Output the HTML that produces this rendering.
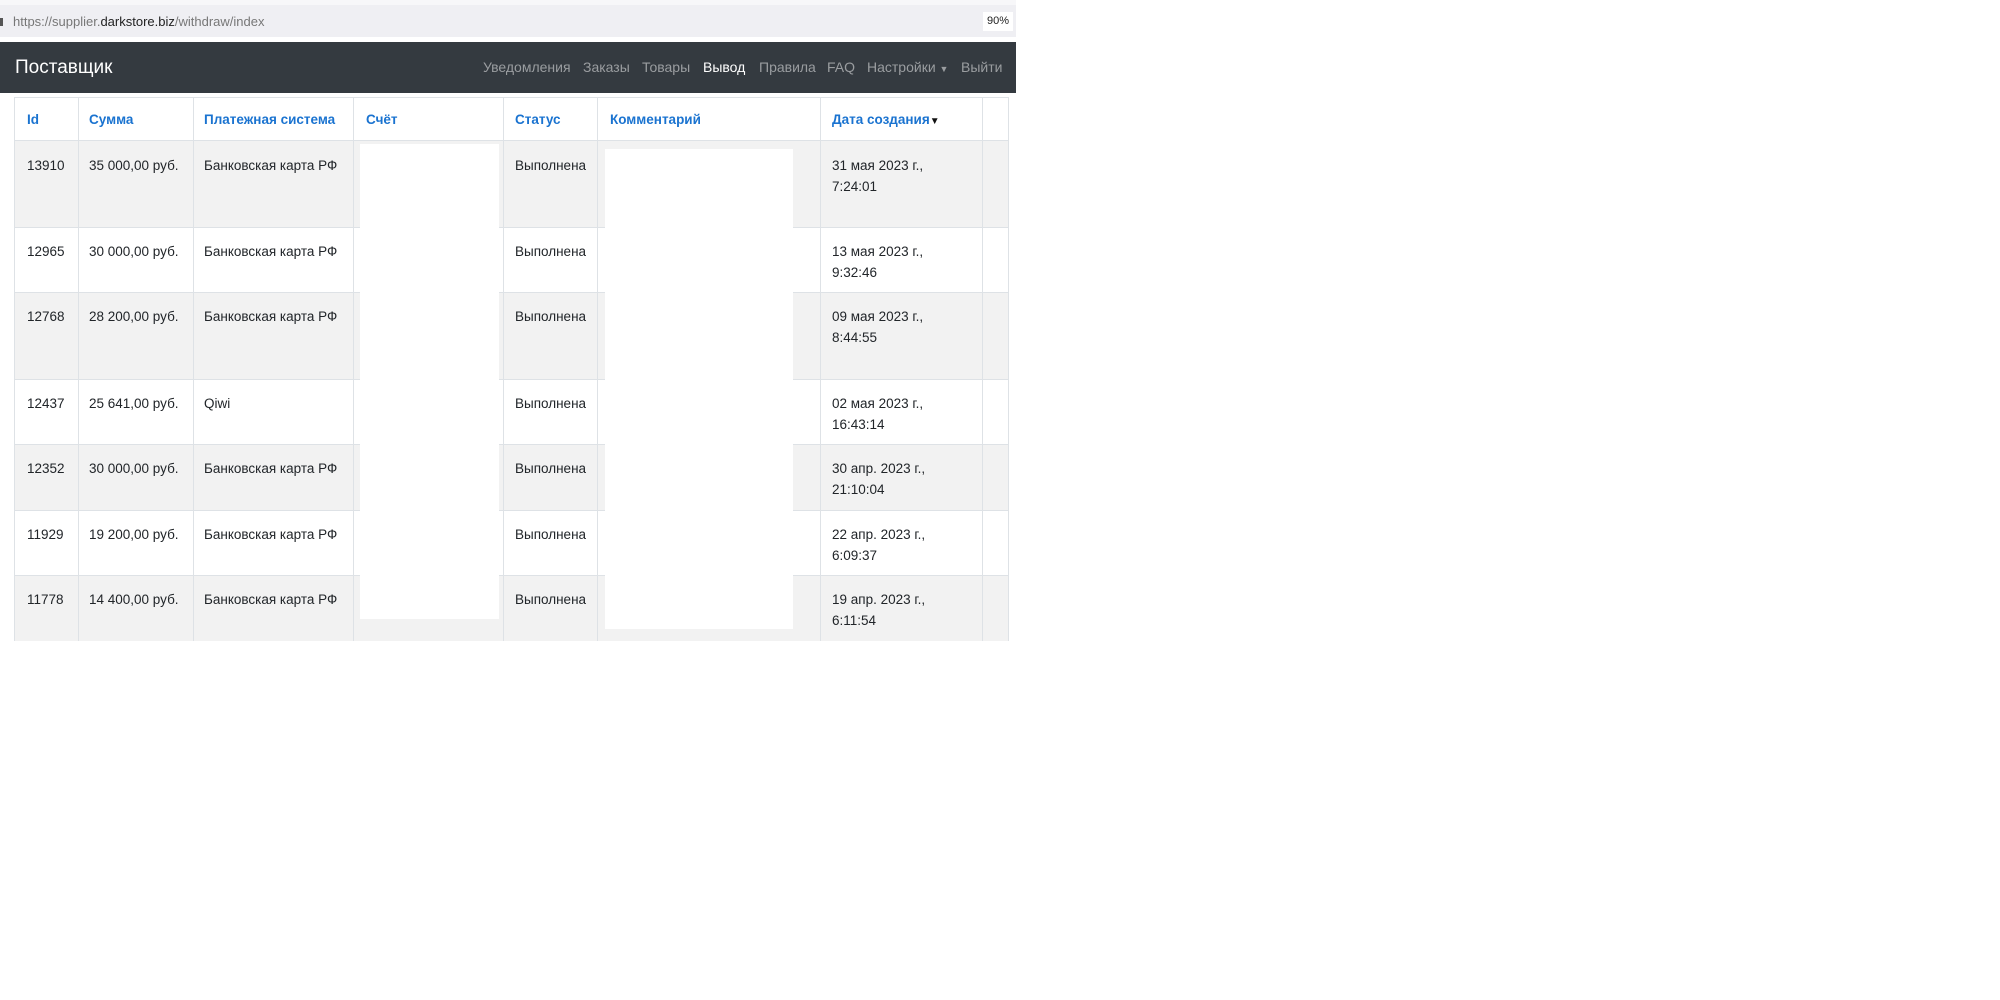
<!DOCTYPE html>
<html><head><meta charset="utf-8"><style>
*{margin:0;padding:0;box-sizing:border-box}
body{width:2000px;height:1000px;background:#fff;font-family:"Liberation Sans","DejaVu Sans",sans-serif;position:relative;overflow:hidden}
.a{position:absolute;white-space:nowrap}
.nav{color:#9a9da0;font-size:14px;top:59px}
.th{color:#1a73d0;font-weight:bold;font-size:13.5px;top:112px}
.td{color:#212529;font-size:13.5px;line-height:21px}
.vl{position:absolute;width:1px;background:#dee2e6;top:97px;height:544px}
.hl{position:absolute;height:1px;background:#dee2e6;left:14px;width:995px}
.st{position:absolute;left:14px;width:995px;background:#f2f2f2}
</style></head><body>
<div class="a" style="left:0;top:0;width:1016px;height:5px;background:#f7f7f9"></div>
<div class="a" style="left:0;top:5px;width:1016px;height:32px;background:#efeff3"></div>
<div class="a" style="left:0;top:18px;width:3px;height:8px;background:#555"></div>
<div class="a" style="left:13px;top:14px;font-size:13px;color:#777">https://supplier.<span style="color:#222">darkstore.biz</span>/withdraw/index</div>
<div class="a" style="left:983px;top:12px;width:30px;height:19px;background:#fff;font-size:11px;color:#222;text-align:center;line-height:19px">90%</div>
<div class="a" style="left:0;top:42px;width:1016px;height:51px;background:#343a40"></div>
<div class="a" style="left:15px;top:57px;font-size:19px;color:#fff">Поставщик</div>
<div class="a nav" style="left:483px">Уведомления</div>
<div class="a nav" style="left:583px">Заказы</div>
<div class="a nav" style="left:642px">Товары</div>
<div class="a nav" style="left:703px;color:#fff">Вывод</div>
<div class="a nav" style="left:759px">Правила</div>
<div class="a nav" style="left:827px">FAQ</div>
<div class="a nav" style="left:867px">Настройки <span style="font-size:9px">▼</span></div>
<div class="a nav" style="left:961px">Выйти</div>

<div class="st" style="top:140px;height:87px"></div>
<div class="st" style="top:292px;height:87px"></div>
<div class="st" style="top:444px;height:66px"></div>
<div class="st" style="top:575px;height:66px"></div>

<div class="hl" style="top:97px"></div>
<div class="hl" style="top:140px"></div>
<div class="hl" style="top:227px"></div>
<div class="hl" style="top:292px"></div>
<div class="hl" style="top:379px"></div>
<div class="hl" style="top:444px"></div>
<div class="hl" style="top:510px"></div>
<div class="hl" style="top:575px"></div>
<div class="vl" style="left:14px"></div>
<div class="vl" style="left:78px"></div>
<div class="vl" style="left:193px"></div>
<div class="vl" style="left:353px"></div>
<div class="vl" style="left:503px"></div>
<div class="vl" style="left:597px"></div>
<div class="vl" style="left:820px"></div>
<div class="vl" style="left:982px"></div>
<div class="vl" style="left:1008px"></div>

<div class="a th" style="left:27px">Id</div>
<div class="a th" style="left:89px">Сумма</div>
<div class="a th" style="left:204px">Платежная система</div>
<div class="a th" style="left:366px">Счёт</div>
<div class="a th" style="left:515px">Статус</div>
<div class="a th" style="left:610px">Комментарий</div>
<div class="a th" style="left:832px">Дата создания<span style="font-size:10px;color:#111">▼</span></div>

<div class="a td" style="left:27px;top:155px">13910</div><div class="a td" style="left:89px;top:155px">35 000,00 руб.</div><div class="a td" style="left:204px;top:155px">Банковская карта РФ</div><div class="a td" style="left:515px;top:155px">Выполнена</div><div class="a td" style="left:832px;top:155px">31 мая 2023 г.,<br>7:24:01</div>
<div class="a td" style="left:27px;top:241px">12965</div><div class="a td" style="left:89px;top:241px">30 000,00 руб.</div><div class="a td" style="left:204px;top:241px">Банковская карта РФ</div><div class="a td" style="left:515px;top:241px">Выполнена</div><div class="a td" style="left:832px;top:241px">13 мая 2023 г.,<br>9:32:46</div>
<div class="a td" style="left:27px;top:306px">12768</div><div class="a td" style="left:89px;top:306px">28 200,00 руб.</div><div class="a td" style="left:204px;top:306px">Банковская карта РФ</div><div class="a td" style="left:515px;top:306px">Выполнена</div><div class="a td" style="left:832px;top:306px">09 мая 2023 г.,<br>8:44:55</div>
<div class="a td" style="left:27px;top:393px">12437</div><div class="a td" style="left:89px;top:393px">25 641,00 руб.</div><div class="a td" style="left:204px;top:393px">Qiwi</div><div class="a td" style="left:515px;top:393px">Выполнена</div><div class="a td" style="left:832px;top:393px">02 мая 2023 г.,<br>16:43:14</div>
<div class="a td" style="left:27px;top:458px">12352</div><div class="a td" style="left:89px;top:458px">30 000,00 руб.</div><div class="a td" style="left:204px;top:458px">Банковская карта РФ</div><div class="a td" style="left:515px;top:458px">Выполнена</div><div class="a td" style="left:832px;top:458px">30 апр. 2023 г.,<br>21:10:04</div>
<div class="a td" style="left:27px;top:524px">11929</div><div class="a td" style="left:89px;top:524px">19 200,00 руб.</div><div class="a td" style="left:204px;top:524px">Банковская карта РФ</div><div class="a td" style="left:515px;top:524px">Выполнена</div><div class="a td" style="left:832px;top:524px">22 апр. 2023 г.,<br>6:09:37</div>
<div class="a td" style="left:27px;top:589px">11778</div><div class="a td" style="left:89px;top:589px">14 400,00 руб.</div><div class="a td" style="left:204px;top:589px">Банковская карта РФ</div><div class="a td" style="left:515px;top:589px">Выполнена</div><div class="a td" style="left:832px;top:589px">19 апр. 2023 г.,<br>6:11:54</div>

<div class="a" style="left:360px;top:144px;width:139px;height:475px;background:#fff"></div>
<div class="a" style="left:605px;top:149px;width:188px;height:480px;background:#fff"></div>
</body></html>
